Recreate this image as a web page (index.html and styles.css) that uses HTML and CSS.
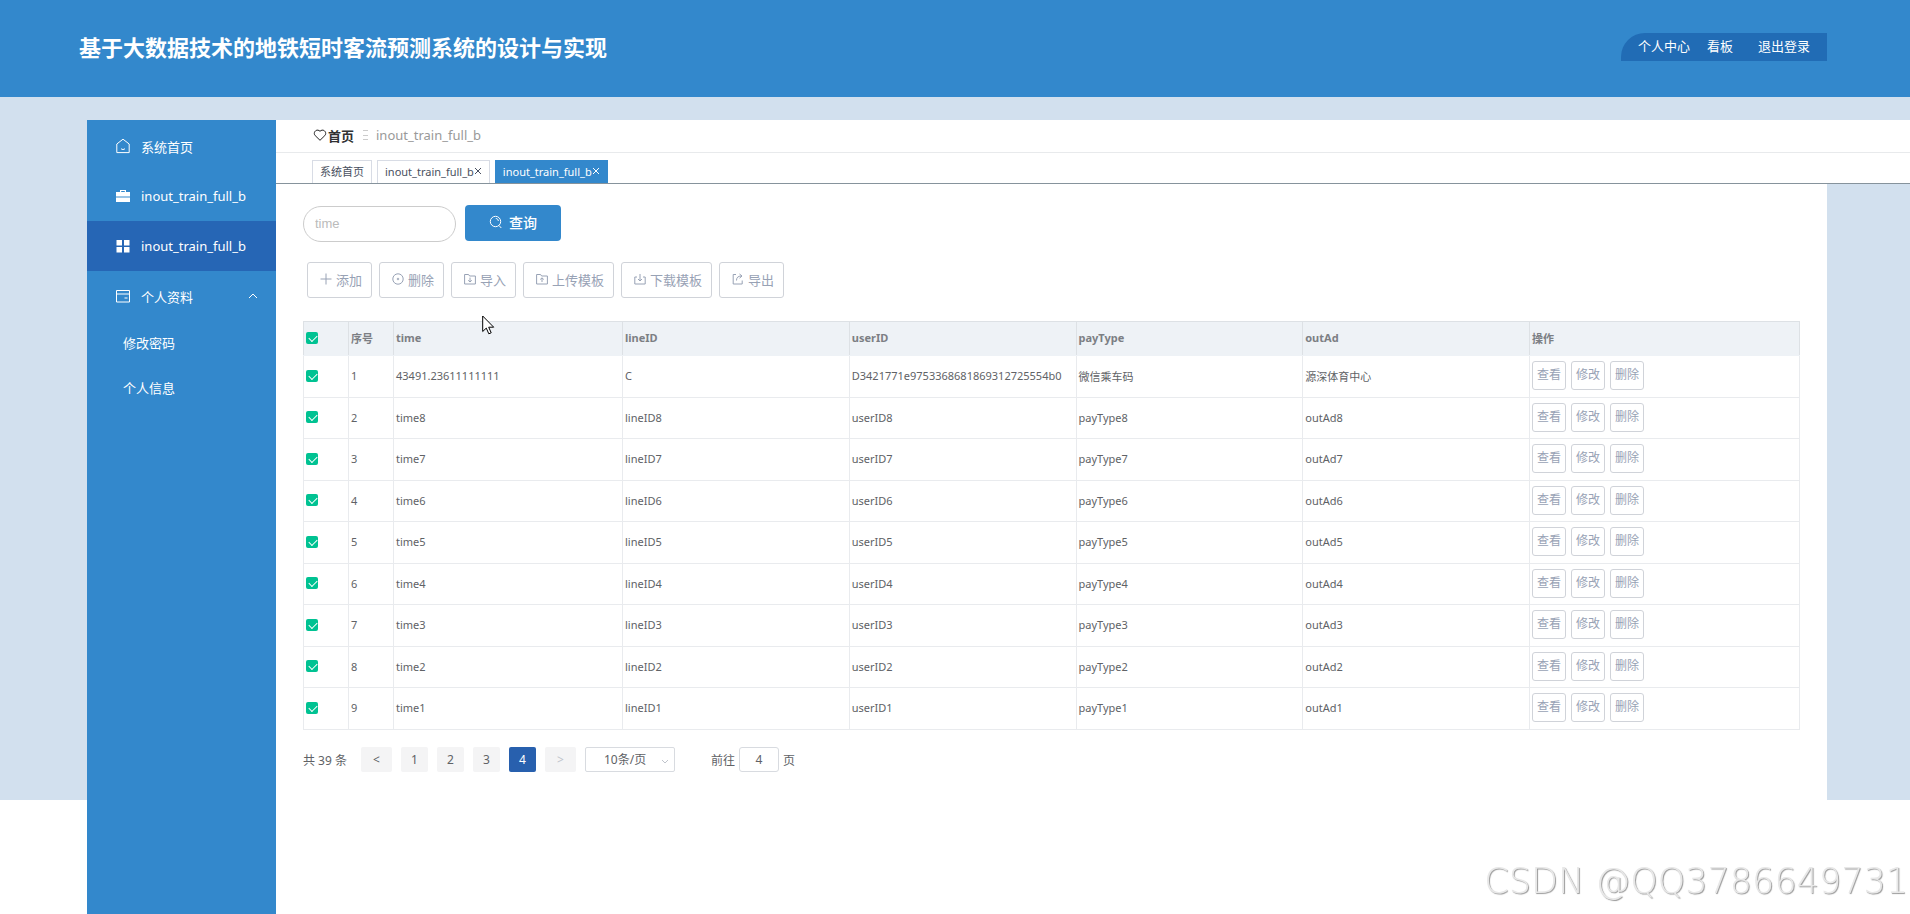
FILE: index.html
```
<!DOCTYPE html>
<html lang="zh-CN">
<head>
    <meta charset="UTF-8">
    <meta name="viewport" content="width=device-width, initial-scale=1.0">
    <title>基于大数据技术的地铁短时客流预测系统的设计与实现</title>
    <link rel="stylesheet" href="styles.css">
</head>
<body>
    <header class="header">
        <h1>基于大数据技术的地铁短时客流预测系统的设计与实现</h1>
        <nav class="user-nav">
            <a href="#">个人中心</a>
            <a href="#">看板</a>
            <a href="#" class="logout">退出登录</a>
        </nav>
    </header>

    <div class="layout">
        <!-- Sidebar menu -->
        <aside class="sidebar">
            <a href="#" class="menu-item">
                <svg viewBox="0 0 16 16" class="line"><path d="M8 1.2 14.2 6v8.6H1.8V6zM6 10.6c1 1.2 3 1.2 4 0"/></svg>
                <span>系统首页</span>
            </a>
            <a href="#" class="menu-item">
                <svg viewBox="0 0 16 16"><path d="M5 4V2h6v2h4v4.5H1V4zM6.2 4h3.6v-.9H6.2zM1 9.5h14V14H1z" fill="currentColor" fill-rule="evenodd"/></svg>
                <span>inout_train_full_b</span>
            </a>
            <a href="#" class="menu-item active">
                <svg viewBox="0 0 16 16"><path d="M1.5 2H7v5.500H1.500zM9 2h5.500v5.500H9zM1.500 9H7v5.500H1.500zM9 9h5.500v5.500H9z" fill="currentColor"/></svg>
                <span>inout_train_full_b</span>
            </a>
            <a href="#" class="menu-item">
                <svg viewBox="0 0 16 16" class="line"><path d="M1.500 2.500h13v11.500h-13zM1.500 6h13M9.500 10h3"/></svg>
                <span>个人资料</span>
                <svg viewBox="0 0 10 10" class="line arrow"><path d="M1 7l4-4 4 4"/></svg>
            </a>
            <a href="#" class="sub-item">修改密码</a>
            <a href="#" class="sub-item">个人信息</a>
        </aside>

        <main class="main">
            <div class="breadcrumb">
                <svg viewBox="0 0 14 14"><path d="M7 12.300 2.200 7.600C-.6 4.600 3.700-.1 7 3.300c3.300-3.400 7.600 1.300 4.800 4.300z"/></svg>
                <a href="#">首页</a>
                <span class="separator"></span>
                <span>inout_train_full_b</span>
            </div>
            <div class="tabs">
                <a href="#" class="tab">系统首页</a>
                <a href="#" class="tab">inout_train_full_b<svg viewBox="0 0 8 8"><path d="M1 1l6 6M7 1L1 7"/></svg></a>
                <a href="#" class="tab active">inout_train_full_b<svg viewBox="0 0 8 8"><path d="M1 1l6 6M7 1L1 7"/></svg></a>
            </div>

            <div class="content">
                <form class="search">
                    <input type="text" placeholder="time" aria-label="time">
                    <button type="button">
                        <svg viewBox="0 0 14 14"><circle cx="6.500" cy="6.500" r="5.200"/><path d="M10 10.500l2.300 2.500M6.800 3.500c1.500 0 2.500 1 2.500 2.500"/></svg>
                        查询
                    </button>
                </form>

                <div class="toolbar">
                    <button type="button"><svg viewBox="0 0 12 12"><path d="M6 .5v11M.5 6h11"/></svg>添加</button>
                    <button type="button"><svg viewBox="0 0 12 12"><circle cx="6" cy="6" r="5.200"/><circle cx="6" cy="6" r=".8"/></svg>删除</button>
                    <button type="button"><svg viewBox="0 0 12 12"><path d="M.6 1.500h4l1 1.500h5.800v8H.6zM6 4.600v4.400M4.200 7.300 6 9l1.800-1.700"/></svg>导入</button>
                    <button type="button"><svg viewBox="0 0 12 12"><path d="M.6 1.500h4l1 1.500h5.800v8H.6zM6 9V5M4.200 6.500 6 4.800l1.800 1.700"/></svg>上传模板</button>
                    <button type="button"><svg viewBox="0 0 12 12"><path d="M3 4H.8v7h10.400V4H9M6 1v7M4 6l2 2 2-2"/></svg>下载模板</button>
                    <button type="button"><svg viewBox="0 0 12 12"><path d="M4 1.500H1.200v9.500h9V7.500M4.500 7.500c0-3 1.500-4.500 5-4.500M7.500 1l2.500 2-2.500 2.200"/></svg>导出</button>
                </div>

                <table class="data-table">
                    <colgroup>
                        <col class="col-small">
                        <col class="col-small">
                        <col class="col-time">
                        <col><col><col><col>
                        <col class="col-action">
                    </colgroup>
                    <thead>
                        <tr>
                            <th><input type="checkbox" aria-label="全选" checked></th>
                            <th>序号</th>
                            <th>time</th>
                            <th>lineID</th>
                            <th>userID</th>
                            <th>payType</th>
                            <th>outAd</th>
                            <th>操作</th>
                        </tr>
                    </thead>
                    <tbody>
                        <tr>
                            <td><input type="checkbox" aria-label="1" checked></td>
                            <td>1</td><td>43491.23611111111</td><td>C</td><td>D3421771e9753368681869312725554b0</td><td>微信乘车码</td><td>源深体育中心</td>
                            <td><div class="actions"><button type="button">查看</button><button type="button">修改</button><button type="button">删除</button></div></td>
                        </tr>
                        <tr>
                            <td><input type="checkbox" aria-label="2" checked></td>
                            <td>2</td><td>time8</td><td>lineID8</td><td>userID8</td><td>payType8</td><td>outAd8</td>
                            <td><div class="actions"><button type="button">查看</button><button type="button">修改</button><button type="button">删除</button></div></td>
                        </tr>
                        <tr>
                            <td><input type="checkbox" aria-label="3" checked></td>
                            <td>3</td><td>time7</td><td>lineID7</td><td>userID7</td><td>payType7</td><td>outAd7</td>
                            <td><div class="actions"><button type="button">查看</button><button type="button">修改</button><button type="button">删除</button></div></td>
                        </tr>
                        <tr>
                            <td><input type="checkbox" aria-label="4" checked></td>
                            <td>4</td><td>time6</td><td>lineID6</td><td>userID6</td><td>payType6</td><td>outAd6</td>
                            <td><div class="actions"><button type="button">查看</button><button type="button">修改</button><button type="button">删除</button></div></td>
                        </tr>
                        <tr>
                            <td><input type="checkbox" aria-label="5" checked></td>
                            <td>5</td><td>time5</td><td>lineID5</td><td>userID5</td><td>payType5</td><td>outAd5</td>
                            <td><div class="actions"><button type="button">查看</button><button type="button">修改</button><button type="button">删除</button></div></td>
                        </tr>
                        <tr>
                            <td><input type="checkbox" aria-label="6" checked></td>
                            <td>6</td><td>time4</td><td>lineID4</td><td>userID4</td><td>payType4</td><td>outAd4</td>
                            <td><div class="actions"><button type="button">查看</button><button type="button">修改</button><button type="button">删除</button></div></td>
                        </tr>
                        <tr>
                            <td><input type="checkbox" aria-label="7" checked></td>
                            <td>7</td><td>time3</td><td>lineID3</td><td>userID3</td><td>payType3</td><td>outAd3</td>
                            <td><div class="actions"><button type="button">查看</button><button type="button">修改</button><button type="button">删除</button></div></td>
                        </tr>
                        <tr>
                            <td><input type="checkbox" aria-label="8" checked></td>
                            <td>8</td><td>time2</td><td>lineID2</td><td>userID2</td><td>payType2</td><td>outAd2</td>
                            <td><div class="actions"><button type="button">查看</button><button type="button">修改</button><button type="button">删除</button></div></td>
                        </tr>
                        <tr>
                            <td><input type="checkbox" aria-label="9" checked></td>
                            <td>9</td><td>time1</td><td>lineID1</td><td>userID1</td><td>payType1</td><td>outAd1</td>
                            <td><div class="actions"><button type="button">查看</button><button type="button">修改</button><button type="button">删除</button></div></td>
                        </tr>
                    </tbody>
                </table>

                <!-- Pagination -->
                <div class="pagination">
                    <span class="total">共 39 条</span>
                    <button type="button" class="step">&lt;</button>
                    <button type="button">1</button>
                    <button type="button">2</button>
                    <button type="button">3</button>
                    <button type="button" class="current">4</button>
                    <button type="button" class="step" disabled>&gt;</button>
                    <div class="page-size">
                        <select aria-label="每页条数">
                            <option>10条/页</option>
                        </select>
                        <svg viewBox="0 0 8 8"><path d="M1 3l3 3 3-3"/></svg>
                    </div>
                    <label class="jump">前往 <input type="text" value="4"> 页</label>
                </div>
            </div>
        </main>
    </div>

    <svg class="cursor" viewBox="0 0 13 20"><path d="M.7 1v15.500l3.600-3.400 2.500 5.700 2.400-1-2.500-5.600h5z"/></svg>
    <div class="watermark">CSDN @QQ3786649731</div>
</body>
</html>
```

FILE: styles.css
```
* {
    box-sizing: border-box;
}

body {
    display: flex;
    flex-direction: column;
    min-height: 100vh;
    margin: 0;
    font-family: "Noto Sans", "Noto Sans CJK SC", sans-serif;
    font-size: 11px;
    color: #606266;
    background-color: white;
}

a {
    color: inherit;
    text-decoration: none;
}

button, input, select {
    font-family: inherit;
    margin: 0;
}

svg {
    fill: none;
    stroke: currentColor;
    flex-shrink: 0;
}

.header {
    display: flex;
    justify-content: space-between;
    align-items: center;
    height: 97px;
    padding: 0 83px 3px 79px;
    background-color: #3388cc;
    color: white;
}

.header h1 {
    margin: 0;
    font-size: 22px;
    line-height: 32px;
}

.user-nav {
    display: flex;
    gap: 17px;
    height: 28px;
    padding: 0 17px;
    background-color: #216cb5;
    border-radius: 24px 0 0 0;
    font-size: 13px;
    line-height: 27px;
}

.user-nav .logout {
    margin-left: 8px;
}

/* the tint stops under the table, the menu goes on to the bottom */
.layout {
    flex: 1;
    display: flex;
    padding: 23px 0 0 87px;
    background: linear-gradient(#d2e0ee, #d2e0ee) top / 100% 703px no-repeat;
}

.sidebar {
    flex: 0 0 189px;
    padding-top: 1px;
    background-color: #3388cc;
    color: white;
    font-size: 13px;
}

.menu-item {
    display: flex;
    align-items: center;
    gap: 10px;
    height: 50px;
    padding: 0 18px 0 28px;
}

.menu-item svg {
    width: 16px;
    height: 16px;
    stroke: none;
}

.menu-item svg.line {
    stroke: currentColor;
}

.menu-item .arrow {
    width: 10px;
    height: 10px;
    margin-left: auto;
}

.menu-item.active {
    background-color: #2666b5;
}

.sub-item {
    display: block;
    padding-left: 36px;
    line-height: 45px;
}

.main {
    flex: 1;
    min-width: 0;
}

.breadcrumb {
    display: flex;
    align-items: center;
    height: 33px;
    padding: 0 0 2px 37px;
    background-color: white;
    border-bottom: 1px solid #e8eaec;
    font-size: 13px;
    color: #999;
}

.breadcrumb svg {
    width: 14px;
    height: 14px;
    color: #222;
}

.breadcrumb a {
    margin-left: 1px;
    color: #303133;
    font-weight: bold;
}

.separator {
    width: 5px;
    height: 10px;
    margin: 0 8px 0 9px;
    border-top: 1px solid #ccc;
    border-bottom: 1px solid #ccc;
    background: linear-gradient(#ccc, #ccc) center / 5px 1px no-repeat;
}

.tabs {
    display: flex;
    align-items: flex-end;
    gap: 5px;
    height: 31px;
    padding-left: 36px;
    background-color: white;
    border-bottom: 1px solid #86939c;
}

.tab {
    display: flex;
    align-items: center;
    height: 23px;
    padding: 0 7px 2px;
    border: 1px solid #d8dce5;
    border-bottom: none;
    color: #495060;
}

.tab svg {
    width: 8px;
    height: 8px;
}

.tab.active {
    background-color: #3388cc;
    border-color: #3388cc;
    color: white;
}

.content {
    margin-right: 83px;
    padding: 21px 27px 40px;
    background-color: white;
}

.search {
    display: flex;
    gap: 9px;
}

.search input {
    width: 153px;
    height: 36px;
    margin-top: 1px;
    padding: 0 11px 2px;
    border: 1px solid #ccc;
    border-radius: 18px;
    font-family: "Liberation Sans", sans-serif;
    font-size: 13px;
}

.search input::placeholder {
    color: #bbb;
}

.search button {
    display: flex;
    align-items: center;
    justify-content: center;
    gap: 6px;
    width: 96px;
    height: 36px;
    padding: 0 0 2px;
    border: none;
    border-radius: 4px;
    background-color: #3388cc;
    color: white;
    font-size: 14px;
    font-weight: 500;
}

.search svg {
    width: 14px;
    height: 14px;
}

.toolbar {
    display: flex;
    gap: 7px;
    margin: 20px 0 23px;
    padding-left: 4px;
}

.toolbar button {
    display: flex;
    align-items: center;
    gap: 4px;
    height: 36px;
    padding: 0 9px 2px 12px;
    border: 1px solid #d0d3d9;
    border-radius: 3px;
    background-color: white;
    color: #98a2b5;
    font-size: 13px;
}

.toolbar svg {
    width: 12px;
    height: 12px;
}

.data-table {
    width: 100%;
    table-layout: fixed;
    border-collapse: collapse;
}

.col-small {
    width: 45px;
}

.col-time {
    width: 229px;
}

.col-action {
    width: 270px;
}

.data-table th,
.data-table td {
    padding: 0 2px 2px;
    border: 1px solid #e9ebee;
    text-align: left;
}

.data-table th {
    height: 34px;
    background-color: #eef2f6;
    border-color: #dde1e5;
    border-bottom-color: #eef2f6;
    color: #7c7f84;
}

.data-table td {
    height: 41px;
}

.data-table tr:nth-child(odd) td {
    height: 42px;
}

.data-table input {
    display: block;
    appearance: none;
    width: 12px;
    height: 12px;
    border-radius: 2px;
    background-color: #00c292;
}

.data-table input::after {
    content: "";
    display: block;
    width: 7px;
    height: 4px;
    margin: 3px 0 0 3px;
    border-left: 1px solid white;
    border-bottom: 1px solid white;
    transform: rotate(-45deg);
}

.actions {
    display: flex;
    gap: 5px;
}

.actions button {
    width: 34px;
    height: 29px;
    padding: 0 0 3px;
    border: 1px solid #d0d3d9;
    border-radius: 3px;
    background-color: white;
    color: #98a2b5;
    font-size: 12px;
}

.pagination {
    display: flex;
    align-items: center;
    gap: 9px;
    margin-top: 17px;
    font-size: 12px;
}

.total {
    width: 49px;
    white-space: nowrap;
}

.pagination button {
    width: 27px;
    height: 25px;
    padding: 0;
    border: none;
    border-radius: 2px;
    background-color: #f4f4f5;
    color: #606266;
    font-size: 12px;
}

.pagination .step {
    width: 31px;
}

.pagination .current {
    background-color: #2860ae;
    color: white;
}

.pagination button:disabled {
    color: #c0c4cc;
}

.page-size {
    position: relative;
}

.page-size select {
    display: block;
    appearance: none;
    width: 90px;
    height: 25px;
    padding: 0 0 0 18px;
    border: 1px solid #d8dbe0;
    border-radius: 2px;
    background-color: white;
    color: #606266;
    font-size: 12px;
}

.page-size svg {
    position: absolute;
    top: 10px;
    right: 6px;
    width: 8px;
    height: 8px;
    color: #c0c4cc;
}

.jump {
    display: flex;
    align-items: center;
    gap: 4px;
    margin-left: 27px;
}

.jump input {
    width: 40px;
    height: 25px;
    padding: 0;
    border: 1px solid #d8dbe0;
    border-radius: 3px;
    color: #606266;
    font-size: 12px;
    text-align: center;
}

.cursor {
    position: absolute;
    top: 315px;
    left: 482px;
    width: 13px;
    height: 20px;
    fill: white;
    stroke: black;
}

.watermark {
    position: fixed;
    right: 2px;
    bottom: 12px;
    font-family: "DejaVu Sans", sans-serif;
    font-size: 35px;
    font-weight: 200;
    line-height: 42px;
    color: #e8e8e8;
    text-shadow: 1px 1px 1px #999;
}
```
